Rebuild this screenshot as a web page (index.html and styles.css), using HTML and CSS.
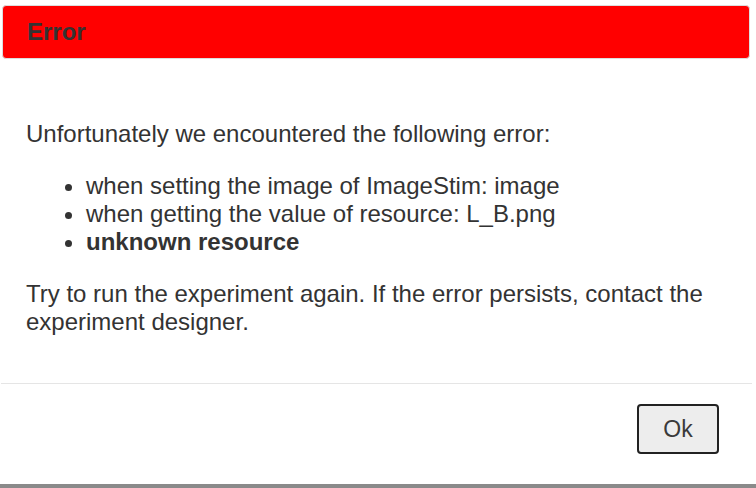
FILE: index.html
```html
<!DOCTYPE html>
<html>
<head>
<meta charset="utf-8">
<link rel="stylesheet" href="styles.css">
</head>
<body>
<div class="dialog">
  <div class="titlebar"><span class="title">Error</span></div>
  <div class="content">
    <p class="intro">Unfortunately we encountered the following error:</p>
    <ul class="errors">
      <li>when setting the image of ImageStim: image</li>
      <li>when getting the value of resource: L_B.png</li>
      <li class="strong">unknown resource</li>
    </ul>
    <p class="advice">Try to run the experiment again. If the error persists, contact the experiment designer.</p>
  </div>
  <div class="buttonpane">
    <button class="ok">Ok</button>
  </div>
</div>
</body>
</html>
```
FILE: styles.css
```css
html, body {
  margin: 0;
  padding: 0;
  background: #ffffff;
}
body {
  width: 756px;
  height: 488px;
  overflow: hidden;
  font-family: "Liberation Sans", Arial, sans-serif;
  color: #333333;
  border-bottom: 4px solid #8a8a8a;
  box-sizing: border-box;
}
.dialog {
  width: 752px;
  padding-top: 5px;
}
.titlebar {
  margin-left: 2px;
  width: 748px;
  height: 54px;
  box-sizing: border-box;
  background: #ff0000;
  border: 1px solid #dddddd;
  border-radius: 4px;
  display: flex;
  align-items: center;
  padding-left: 24px;
}
.title {
  font-weight: bold;
  font-size: 24px;
  color: #333333;
}
.content {
  padding: 61px 26px 0 26px;
  font-size: 24px;
  line-height: 28px;
}
.content p {
  margin: 0;
}
.errors {
  margin: 24px 0 24px 0;
  padding-left: 60px;
}
.strong {
  font-weight: bold;
}
.buttonpane {
  margin-top: 47px;
  margin-left: 1px;
  border-top: 1px solid #e5e5e5;
  display: flex;
  justify-content: flex-end;
  padding: 20px 33px 0 0;
}
.ok {
  width: 82px;
  height: 50px;
  background: #ededed;
  border: 2px solid #222222;
  border-radius: 4px;
  font-family: "Liberation Sans", Arial, sans-serif;
  font-size: 23px;
  color: #3a3a3a;
  padding: 0;
}
```
